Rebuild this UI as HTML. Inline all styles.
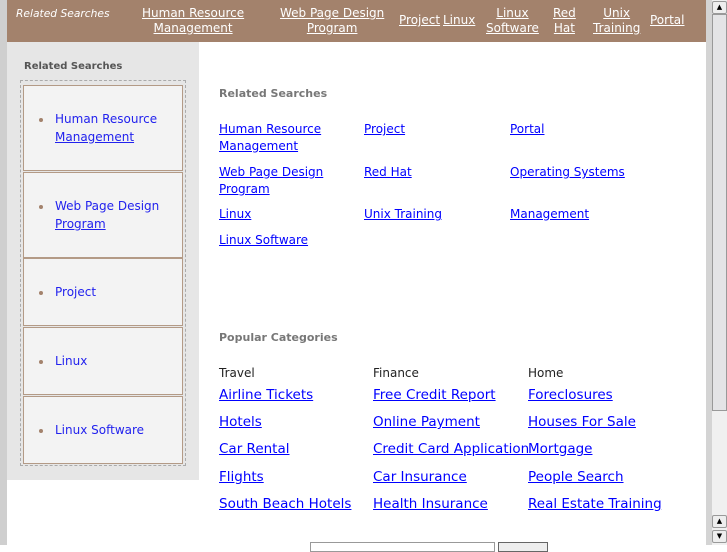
<!DOCTYPE html>
<html><head><meta charset="utf-8"><style>
*{margin:0;padding:0;box-sizing:border-box}
body{width:727px;height:545px;overflow:hidden;background:#fff;font-family:"DejaVu Sans","Liberation Sans",sans-serif;position:relative}
.a{position:absolute;white-space:nowrap}
a{color:#00f;text-decoration:underline}
#lstrip{position:absolute;left:0;top:0;width:7px;height:545px;background:#cfcfcf}
#hdr{position:absolute;left:7px;top:0;width:699px;height:42px;background:#a3826c}
#hdr a{color:#fff;font-size:12px;text-align:center;line-height:15px;position:absolute;top:6px}
#gap{position:absolute;left:706px;top:0;width:6px;height:545px;background:#d4d4d4}
#sb{position:absolute;left:712px;top:0;width:15px;height:545px;background:#f0f0f0}
.btn{position:absolute;left:0;width:15px;height:13px;background:#eee;border:1px solid #999;border-radius:2px;font-size:7px;text-align:center;line-height:11px;color:#000}
#side{position:absolute;left:7px;top:42px;width:192px;height:438px;background:#e6e6e6}
.item{position:absolute;left:23px;width:160px;background:#f3f3f3;border:1px solid #b39a86}
.item .b{position:absolute;left:15px;width:4px;height:4px;border-radius:2px;background:#a3826c}
.item a{position:absolute;left:31px;font-size:12px;line-height:18px;color:#22e;text-decoration:none}
.item a u{text-decoration:underline}
.h{font-weight:bold;color:#777;font-size:11px}
.g a{font-size:12px;line-height:17px}
.p a{font-size:13.5px}
.p span{font-size:12px;color:#222}
</style></head><body>
<div id="lstrip"></div>
<div id="hdr">
<span class="a" style="left:9px;top:7px;color:#fff;font-style:italic;font-size:10.7px">Related Searches</span>
<a style="left:135px">Human Resource<br>Management</a>
<a style="left:273px">Web Page Design<br>Program</a>
<a style="left:392px;top:13px">Project</a>
<a style="left:436px;top:13px">Linux</a>
<a style="left:479px">Linux<br>Software</a>
<a style="left:546px">Red<br>Hat</a>
<a style="left:586px">Unix<br>Training</a>
<a style="left:643px;top:13px">Portal</a>
</div>
<div id="gap"></div>
<div id="sb">
<div class="btn" style="top:1px">▲</div>
<div style="position:absolute;left:0;top:14px;width:15px;height:397px;background:#e4e4e6;border:1px solid #999"></div>
<div class="btn" style="top:515px">▲</div>
<div class="btn" style="top:530px">▼</div>
</div>
<div id="side">
<span class="a" style="left:17px;top:19px;font-size:10px;font-weight:bold;color:#555">Related Searches</span>
<div style="position:absolute;left:13px;top:38px;width:166px;height:386px;border:1px dashed #aaa"></div>
</div>
<div class="item" style="top:85px;height:86px"><div class="b" style="top:32px"></div><a style="top:24px">Human Resource<br><u>Management</u></a></div>
<div class="item" style="top:172px;height:86px"><div class="b" style="top:32px"></div><a style="top:24px">Web Page Design<br><u>Program</u></a></div>
<div class="item" style="top:258px;height:68px"><div class="b" style="top:32px"></div><a style="top:24px">Project</a></div>
<div class="item" style="top:327px;height:68px"><div class="b" style="top:32px"></div><a style="top:24px">Linux</a></div>
<div class="item" style="top:396px;height:68px"><div class="b" style="top:32px"></div><a style="top:24px">Linux Software</a></div>

<span class="a h" style="left:219px;top:87px">Related Searches</span>
<div class="g">
<a class="a" style="left:219px;top:121px">Human Resource<br>Management</a>
<a class="a" style="left:364px;top:121px">Project</a>
<a class="a" style="left:510px;top:121px">Portal</a>
<a class="a" style="left:219px;top:164px">Web Page Design<br>Program</a>
<a class="a" style="left:364px;top:164px">Red Hat</a>
<a class="a" style="left:510px;top:164px">Operating Systems</a>
<a class="a" style="left:219px;top:206px">Linux</a>
<a class="a" style="left:364px;top:206px">Unix Training</a>
<a class="a" style="left:510px;top:206px">Management</a>
<a class="a" style="left:219px;top:232px">Linux Software</a>
</div>
<span class="a h" style="left:219px;top:331px">Popular Categories</span>
<div class="p">
<span class="a" style="left:219px;top:366px">Travel</span>
<span class="a" style="left:373px;top:366px">Finance</span>
<span class="a" style="left:528px;top:366px">Home</span>
<a class="a" style="left:219px;top:387px">Airline Tickets</a>
<a class="a" style="left:373px;top:387px">Free Credit Report</a>
<a class="a" style="left:528px;top:387px">Foreclosures</a>
<a class="a" style="left:219px;top:414px">Hotels</a>
<a class="a" style="left:373px;top:414px">Online Payment</a>
<a class="a" style="left:528px;top:414px">Houses For Sale</a>
<a class="a" style="left:219px;top:441px">Car Rental</a>
<a class="a" style="left:373px;top:441px">Credit Card Application</a>
<a class="a" style="left:528px;top:441px">Mortgage</a>
<a class="a" style="left:219px;top:469px">Flights</a>
<a class="a" style="left:373px;top:469px">Car Insurance</a>
<a class="a" style="left:528px;top:469px">People Search</a>
<a class="a" style="left:219px;top:496px">South Beach Hotels</a>
<a class="a" style="left:373px;top:496px">Health Insurance</a>
<a class="a" style="left:528px;top:496px">Real Estate Training</a>
</div>
<div style="position:absolute;left:310px;top:542px;width:185px;height:10px;border:1px solid #999;background:#fff"></div>
<div style="position:absolute;left:498px;top:542px;width:50px;height:10px;border:1px solid #666;background:#eee"></div>
</body></html>
